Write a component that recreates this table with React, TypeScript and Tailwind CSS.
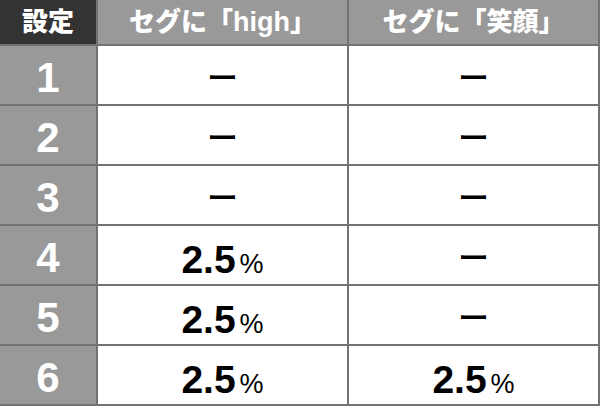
import React from "react";

const jp = { fontFamily: '"Liberation Sans", "Noto Sans CJK JP", sans-serif' };

const rows: { n: string; a: string | null; b: string | null }[] = [
  { n: "1", a: null, b: null },
  { n: "2", a: null, b: null },
  { n: "3", a: null, b: null },
  { n: "4", a: "2.5", b: null },
  { n: "5", a: "2.5", b: null },
  { n: "6", a: "2.5", b: "2.5" },
];

function Cell({ v }: { v: string | null }) {
  return (
    <div className="bg-white flex items-center justify-center">
      {v === null ? (
        <span
          className="text-[31px] font-medium text-black leading-none"
          style={{ fontFamily: '"Noto Sans CJK JP", sans-serif' }}
        >
          ー
        </span>
      ) : (
        <span className="flex items-baseline pt-[8px] text-black" style={jp}>
          <span className="text-[39px] font-bold leading-none">{v}</span>
          <span className="text-[27px] leading-none ml-[4px]">%</span>
        </span>
      )}
    </div>
  );
}

export default function App() {
  return (
    <div className="w-[600px] h-[406px] bg-white overflow-hidden">
      <div
        className="grid grid-cols-[96px_249px_249px] grid-rows-[44px_repeat(6,58px)] gap-[2px] bg-[#737373] pr-[2px] pb-[2px] w-[600px]"
        style={jp}
      >
        <div className="bg-[#333333] flex items-center justify-center text-white font-black text-[26px] leading-none">
          設定
        </div>
        <div className="bg-[#999999] flex items-center justify-center text-white font-black text-[26px] leading-none">
          <span>
            セグに「<span className="text-[27px] font-bold">high</span>」
          </span>
        </div>
        <div className="bg-[#999999] flex items-center justify-center text-white font-black text-[26px] leading-none">
          セグに「笑顔」
        </div>
        {rows.map((r) => (
          <React.Fragment key={r.n}>
            <div className="bg-[#999999] flex items-center justify-center text-white font-bold text-[42px] leading-none pt-[6px]">
              {r.n}
            </div>
            <Cell v={r.a} />
            <Cell v={r.b} />
          </React.Fragment>
        ))}
      </div>
    </div>
  );
}
